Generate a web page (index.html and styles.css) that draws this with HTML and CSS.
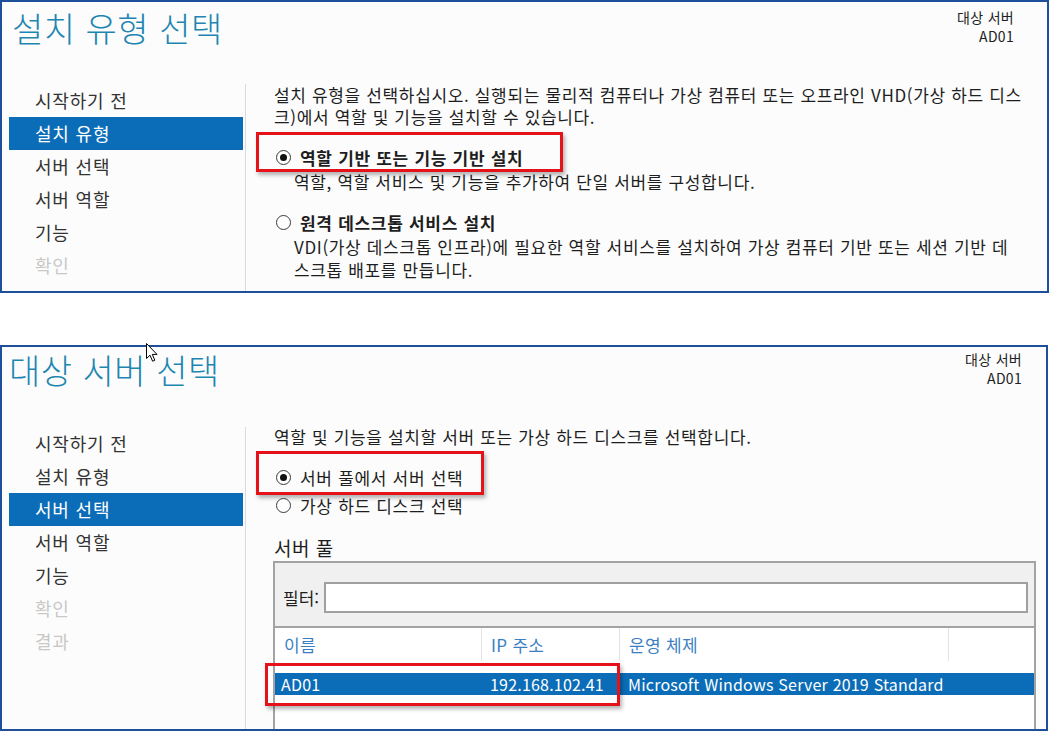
FILE: index.html
```html
<!DOCTYPE html>
<html lang="ko">
<head>
  <meta charset="UTF-8">
  <meta name="viewport" content="width=device-width, initial-scale=1.0">
  <title>역할 및 기능 추가 마법사</title>
  <link rel="stylesheet" href="styles.css">
</head>
<body>
  <!-- 1단계: 설치 유형 -->
  <section class="wizard wizard--type">
    <header class="wizard-head">
      <h1 class="wizard-title">설치 유형 선택</h1>
      <div class="target">대상 서버<br><span class="target-name">AD01</span></div>
    </header>
    <div class="wizard-body">
      <ul class="steps">
        <li class="step">시작하기 전</li>
        <li class="step is-current">설치 유형</li>
        <li class="step">서버 선택</li>
        <li class="step">서버 역할</li>
        <li class="step">기능</li>
        <li class="step is-disabled">확인</li>
      </ul>
      <div class="content">
        <p class="lead">설치 유형을 선택하십시오. 실행되는 물리적 컴퓨터나 가상 컴퓨터 또는 오프라인 VHD(가상 하드 디스<br>크)에서 역할 및 기능을 설치할 수 있습니다.</p>

        <div class="choice choice--strong callout callout--role">
          <span class="radio is-checked"></span>역할 기반 또는 기능 기반 설치
        </div>
        <p class="choice-note">역할, 역할 서비스 및 기능을 추가하여 단일 서버를 구성합니다.</p>

        <div class="choice choice--strong">
          <span class="radio"></span>원격 데스크톱 서비스 설치
        </div>
        <p class="choice-note">VDI(가상 데스크톱 인프라)에 필요한 역할 서비스를 설치하여 가상 컴퓨터 기반 또는 세션 기반 데<br>스크톱 배포를 만듭니다.</p>
      </div>
    </div>
  </section>

  <!-- 2단계: 서버 선택 -->
  <section class="wizard wizard--server">
    <svg class="cursor" width="12" height="19" viewBox="0 0 12 19">
      <path d="M0.5 0.5 L0.5 15.5 L4 12.2 L6.6 18.2 L8.8 17.3 L6.3 11.4 L11 11.4 Z" fill="#fff" stroke="#000" stroke-width="1"/>
    </svg>
    <header class="wizard-head">
      <h1 class="wizard-title">대상 서버 선택</h1>
      <div class="target">대상 서버<br><span class="target-name">AD01</span></div>
    </header>
    <div class="wizard-body">
      <ul class="steps">
        <li class="step">시작하기 전</li>
        <li class="step">설치 유형</li>
        <li class="step is-current">서버 선택</li>
        <li class="step">서버 역할</li>
        <li class="step">기능</li>
        <li class="step is-disabled">확인</li>
        <li class="step is-disabled">결과</li>
      </ul>
      <div class="content content--stack">
        <p class="lead">역할 및 기능을 설치할 서버 또는 가상 하드 디스크를 선택합니다.</p>

        <div class="choice choice--first callout callout--pool">
          <span class="radio is-checked"></span>서버 풀에서 서버 선택
        </div>
        <div class="choice choice--next">
          <span class="radio"></span>가상 하드 디스크 선택
        </div>

        <h2 class="section-title">서버 풀</h2>
        <div class="pool">
          <div class="pool-filter">
            <label class="filter-label" for="filter">필터:</label>
            <input class="filter-input" id="filter" type="text">
          </div>
          <div class="pool-grid pool-head">
            <span>이름</span>
            <span>IP 주소</span>
            <span>운영 체제</span>
            <span></span>
          </div>
          <div class="pool-grid pool-row is-selected callout callout--row">
            <span>AD01</span>
            <span>192.168.102.41</span>
            <span>Microsoft Windows Server 2019 Standard</span>
            <span></span>
          </div>
        </div>
      </div>
    </div>
  </section>
</body>
</html>
```

FILE: styles.css
```css
body {
  margin: 0;
  background-color: #fff;
  font-family: "Noto Sans CJK KR", "Noto Sans", sans-serif;
  color: #1e1e1e;
}

.wizard {
  position: relative;
  box-sizing: border-box;
  display: flex;
  flex-direction: column;
  border: 2px solid #1d4f9b;
  background-color: #fcfcfc;
}

.wizard--type {
  width: 1049px;
  height: 293px;
}

.wizard--server {
  width: 1048px;
  height: 386px;
  margin-top: 52px;
}

.wizard-head {
  display: flex;
  justify-content: space-between;
  align-items: flex-start;
  flex-shrink: 0;
}

.wizard--type .wizard-head {
  height: 82px;
  padding: 0 33px 0 10px;
}

.wizard--server .wizard-head {
  height: 80px;
  padding: 0 24px 0 7px;
}

.wizard-title {
  margin: 6px 0 0;
  font-size: 34px;
  font-weight: 300;
  line-height: 40px;
  letter-spacing: 0.5px;
  color: #1f86b1;
}

.wizard--server .wizard-title {
  margin-top: 3px;
}

.target {
  padding-top: 6px;
  font-size: 14px;
  line-height: 19px;
  letter-spacing: 0.3px;
  text-align: right;
  color: #222;
}

.wizard--server .target {
  padding-top: 3px;
}

.wizard-body {
  display: flex;
  flex: 1;
  min-height: 0;
}

.steps {
  box-sizing: border-box;
  width: 244px;
  flex-shrink: 0;
  margin: 0;
  padding: 0 2px 0 7px;
  list-style: none;
  border-right: 1px solid #dadada;
}

.step {
  height: 33px;
  padding-left: 26px;
  font-size: 18px;
  line-height: 33px;
  letter-spacing: 0.8px;
  color: #333;
}

.step.is-current {
  background-color: #0b6cb7;
  color: #fff;
}

.step.is-disabled {
  color: #c8c8c8;
}

.content {
  flex: 1;
  min-width: 0;
  padding: 0 10px 0 28px;
}

.content--stack {
  display: flex;
  flex-direction: column;
}

.lead {
  margin: 0;
  font-size: 17px;
  line-height: 22px;
  letter-spacing: 0.65px;
  white-space: nowrap;
}

.wizard--server .lead {
  line-height: 20px;
}

.choice {
  display: flex;
  align-items: center;
  gap: 9px;
  height: 24px;
  margin-top: 17px;
  padding-left: 2px;
  font-size: 17px;
  letter-spacing: 0.7px;
  flex-shrink: 0;
}

.choice--strong {
  font-weight: 700;
}

.choice--first {
  margin-top: 18px;
}

.choice--next {
  margin-top: 4px;
}

.choice-note {
  margin: 1px 0 0 20px;
  font-size: 17px;
  line-height: 23px;
  letter-spacing: 0.65px;
  white-space: nowrap;
}

.radio {
  position: relative;
  box-sizing: border-box;
  width: 15px;
  height: 15px;
  flex-shrink: 0;
  border: 1px solid #3a3a3a;
  border-radius: 50%;
  background-color: #fff;
}

.radio.is-checked::after {
  content: "";
  position: absolute;
  left: 3px;
  top: 3px;
  width: 7px;
  height: 7px;
  border-radius: 50%;
  background-color: #111;
}

/* 빨간 강조 테두리 */
.callout {
  position: relative;
}

.callout::after {
  content: "";
  position: absolute;
  box-sizing: border-box;
  border: 3px solid #e5121a;
  box-shadow: 2px 3px 4px rgba(0, 0, 0, 0.3);
  pointer-events: none;
}

.callout--role::after {
  left: -18px;
  top: -13px;
  width: 307px;
  height: 40px;
}

.callout--pool::after {
  left: -18px;
  top: -14px;
  width: 228px;
  height: 44px;
}

.callout--row::after {
  left: -10px;
  top: -10px;
  width: 355px;
  height: 43px;
}

.section-title {
  margin: 18px 0 0;
  font-size: 19px;
  font-weight: 400;
  line-height: 26px;
  letter-spacing: 0.5px;
}

.pool {
  flex: 1;
  margin-left: -1px;
  border: 2px solid #a3a3a3;
  border-bottom: none;
  background-color: #fff;
}

.pool-filter {
  display: flex;
  align-items: center;
  gap: 5px;
  padding: 19px 6px 13px 8px;
  border-bottom: 2px solid #a3a3a3;
  background-color: #f0f0f0;
}

.filter-label {
  font-size: 17px;
  color: #1e1e1e;
}

.filter-input {
  flex: 1;
  box-sizing: border-box;
  height: 31px;
  border: 2px solid #a0a0a0;
  background-color: #fff;
  outline: none;
}

.pool-grid {
  display: grid;
  grid-template-columns: 207px 138px 329px 1fr;
}

.pool-head {
  height: 33px;
  font-size: 17px;
  line-height: 33px;
  letter-spacing: 0.3px;
  color: #3b7fc2;
}

.pool-head span {
  padding-left: 9px;
  border-right: 1px solid #e4e4e4;
}

.pool-head span:last-child {
  border-right: none;
}

.pool-row {
  height: 22px;
  margin-top: 12px;
  font-size: 16px;
  line-height: 22px;
  letter-spacing: 0.2px;
}

.pool-row span {
  padding-left: 8px;
}

.pool-row span:first-child {
  padding-left: 6px;
}

.pool-row.is-selected {
  background-color: #0b6cb7;
  color: #fff;
}

.cursor {
  position: absolute;
  left: 144px;
  top: -4px;
  z-index: 2;
}
```
